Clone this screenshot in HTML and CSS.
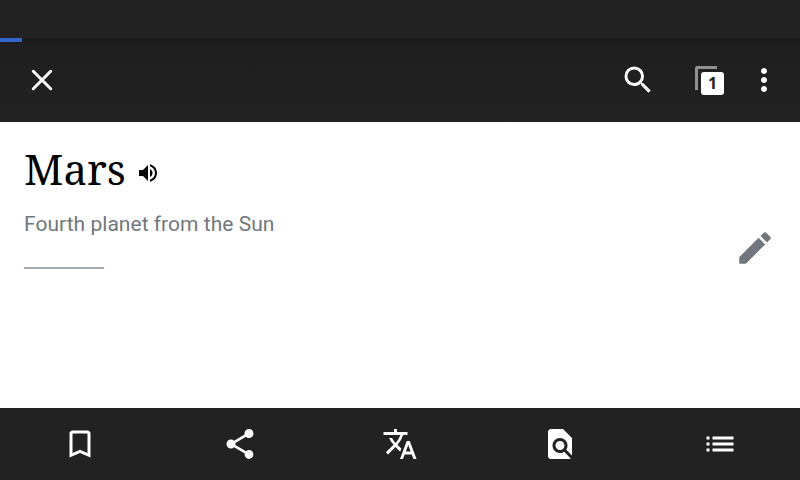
FILE: index.html
```
<!DOCTYPE html>
<html lang="en">
<head>
<meta charset="utf-8">
<title>Mars</title>
<link rel="stylesheet" href="styles.css">
</head>
<body>
<div class="status"></div>
<div class="progress"><div class="progress-value"></div></div>
<header class="toolbar">
  <svg class="icon" viewBox="0 0 24 24"><path d="M6.200 6.200 17.800 17.800M17.800 6.200 6.200 17.800" fill="none" stroke="currentColor" stroke-width="2" stroke-linecap="round"/></svg>
  <span class="spacer"></span>
  <svg class="icon search" viewBox="0 0 24 24"><path d="M15.5 14h-.79l-.28-.27A6.471 6.471 0 0 0 16 9.5 6.5 6.5 0 1 0 9.5 16c1.61 0 3.09-.59 4.23-1.57l.27.28v.79l5 4.99L20.49 19l-4.99-5zm-6 0C7.01 14 5 11.99 5 9.5S7.01 5 9.5 5 14 7.01 14 9.5 11.99 14 9.5 14z"/></svg>
  <div class="tabs"><span class="tabs-back"></span><span class="tabs-count">1</span></div>
  <svg class="icon" viewBox="0 0 24 24"><path d="M12 8c1.1 0 2-.9 2-2s-.9-2-2-2-2 .9-2 2 .9 2 2 2zm0 2c-1.100 0-2 .9-2 2s.9 2 2 2 2-.9 2-2-.9-2-2-2zm0 6c-1.100 0-2 .9-2 2s.9 2 2 2 2-.9 2-2-.9-2-2-2z"/></svg>
</header>
<main class="page">
  <div class="heading">
    <div class="title-row">
      <h1 class="title">Mars</h1>
      <svg class="speaker" viewBox="0 0 24 24"><path d="M3 9v6h4l5 5V4L7 9H3zm13.500 3c0-1.770-1.020-3.290-2.500-4.030v8.050c1.480-.73 2.500-2.250 2.500-4.020zM14 3.230v2.060c2.890.86 5 3.540 5 6.710s-2.110 5.850-5 6.710v2.060c4.010-.91 7-4.490 7-8.770s-2.990-7.860-7-8.770z"/></svg>
    </div>
    <p class="description">Fourth planet from the Sun</p>
    <div class="rule"></div>
  </div>
  <svg class="edit" viewBox="0 0 24 24"><path d="M3 17.250V21h3.750L17.810 9.940l-3.750-3.750L3 17.250zM20.710 7.040a.996.996 0 0 0 0-1.410l-2.340-2.340a.996.996 0 0 0-1.410 0l-1.830 1.830 3.750 3.750 1.830-1.830z"/></svg>
</main>
<nav class="actions">
  <svg class="icon" viewBox="0 0 24 24"><path d="M17 3H7c-1.100 0-1.990.9-1.990 2L5 21l7-3 7 3V5c0-1.100-.9-2-2-2zm0 15-5-2.180L7 18V5h10v13z"/></svg>
  <svg class="icon" viewBox="0 0 24 24"><path d="M18 16.080c-.76 0-1.440.3-1.960.77L8.910 12.700c.05-.23.09-.46.09-.7s-.04-.47-.09-.7l7.050-4.110c.54.5 1.250.81 2.040.81 1.660 0 3-1.340 3-3s-1.340-3-3-3-3 1.340-3 3c0 .24.04.47.09.7L8.040 9.810C7.500 9.310 6.790 9 6 9c-1.660 0-3 1.340-3 3s1.340 3 3 3c.79 0 1.500-.31 2.040-.81l7.120 4.160c-.05.21-.08.43-.08.65 0 1.610 1.310 2.920 2.920 2.920s2.920-1.310 2.920-2.920-1.310-2.920-2.920-2.920z"/></svg>
  <svg class="icon" viewBox="0 0 24 24"><path d="m12.870 15.070-2.540-2.510.03-.03A17.520 17.520 0 0 0 14.070 6H17V4h-7V2H8v2H1v1.990h11.170C11.500 7.920 10.440 9.750 9 11.350 8.070 10.320 7.300 9.190 6.690 8h-2c.73 1.630 1.730 3.170 2.980 4.560l-5.090 5.020L4 19l5-5 3.110 3.110.76-2.040zM18.500 10h-2L12 22h2l1.120-3h4.750L21 22h2l-4.500-12zm-2.620 7 1.620-4.330L19.120 17h-3.240z"/></svg>
  <svg class="icon" viewBox="0 0 24 24"><path d="M20 19.590V8l-6-6H6c-1.100 0-1.990.9-1.990 2L4 20c0 1.100.89 2 1.990 2H18c.45 0 .85-.15 1.190-.4l-4.430-4.430c-.8.520-1.740.83-2.760.83-2.760 0-5-2.240-5-5s2.240-5 5-5 5 2.240 5 5c0 1.020-.31 1.960-.83 2.750L20 19.590zM9 13c0 1.660 1.340 3 3 3s3-1.340 3-3-1.340-3-3-3-3 1.340-3 3z"/></svg>
  <svg class="icon" viewBox="0 0 24 24"><path d="M3 13h2v-2H3v2zm0 4h2v-2H3v2zm0-8h2V7H3v2zm4 4h14v-2H7v2zm0 4h14v-2H7v2zM7 7v2h14V7H7z"/></svg>
</nav>
</body>
</html>
```
FILE: styles.css
```
* { box-sizing: border-box; }
body {
  margin: 0;
  height: 480px;
  overflow: hidden;
  display: flex;
  flex-direction: column;
  background: #fff;
  font-family: Roboto, sans-serif;
}
.status { height: 38px; background: #222; }
.progress { height: 4px; background: #1a1a1a; }
.progress-value { width: 22px; height: 4px; background: #36c; }
.toolbar {
  height: 80px;
  padding: 0 18px 4px 24px;
  display: flex;
  align-items: center;
  background: linear-gradient(#1e1e1e, #222);
}
.icon { width: 36px; height: 36px; fill: currentColor; color: #fff; }
.spacer { flex: 1; }
.search { margin-right: 36px; }
.tabs { position: relative; width: 36px; height: 36px; margin-right: 18px; }
.tabs-back {
  position: absolute;
  left: 3px;
  top: 4px;
  width: 22px;
  height: 24px;
  border: solid #909090;
  border-width: 3px 0 0 3px;
  border-radius: 3px 0 0 0;
}
.tabs-count {
  position: absolute;
  left: 9px;
  top: 10px;
  width: 23px;
  height: 23px;
  border-radius: 3px;
  background: #fff;
  color: #222;
  font: 700 16px/22px "Open Sans", sans-serif;
  text-align: center;
}
.page {
  flex: 1;
  padding: 20px 24px 0;
  display: flex;
  justify-content: space-between;
}
.title-row { display: flex; align-items: center; height: 62px; }
.title {
  margin: 0;
  padding-bottom: 8px;
  font: 400 42px/54px "Noto Serif", "Droid Serif", "Liberation Serif", serif;
  color: #000;
}
.speaker { width: 24px; height: 24px; margin-left: 10px; }
.description {
  margin: 5px 0 0;
  font-size: 21px;
  line-height: 30px;
  letter-spacing: 0.03px;
  color: #72777d;
}
.rule { width: 80px; height: 2px; margin-top: 28px; background: #a2a9b1; }
.edit { width: 42px; height: 42px; margin-top: 85px; fill: #72777d; }
.actions {
  height: 72px;
  display: grid;
  grid-template-columns: repeat(5, 1fr);
  place-items: center;
  background: #222;
}
```
